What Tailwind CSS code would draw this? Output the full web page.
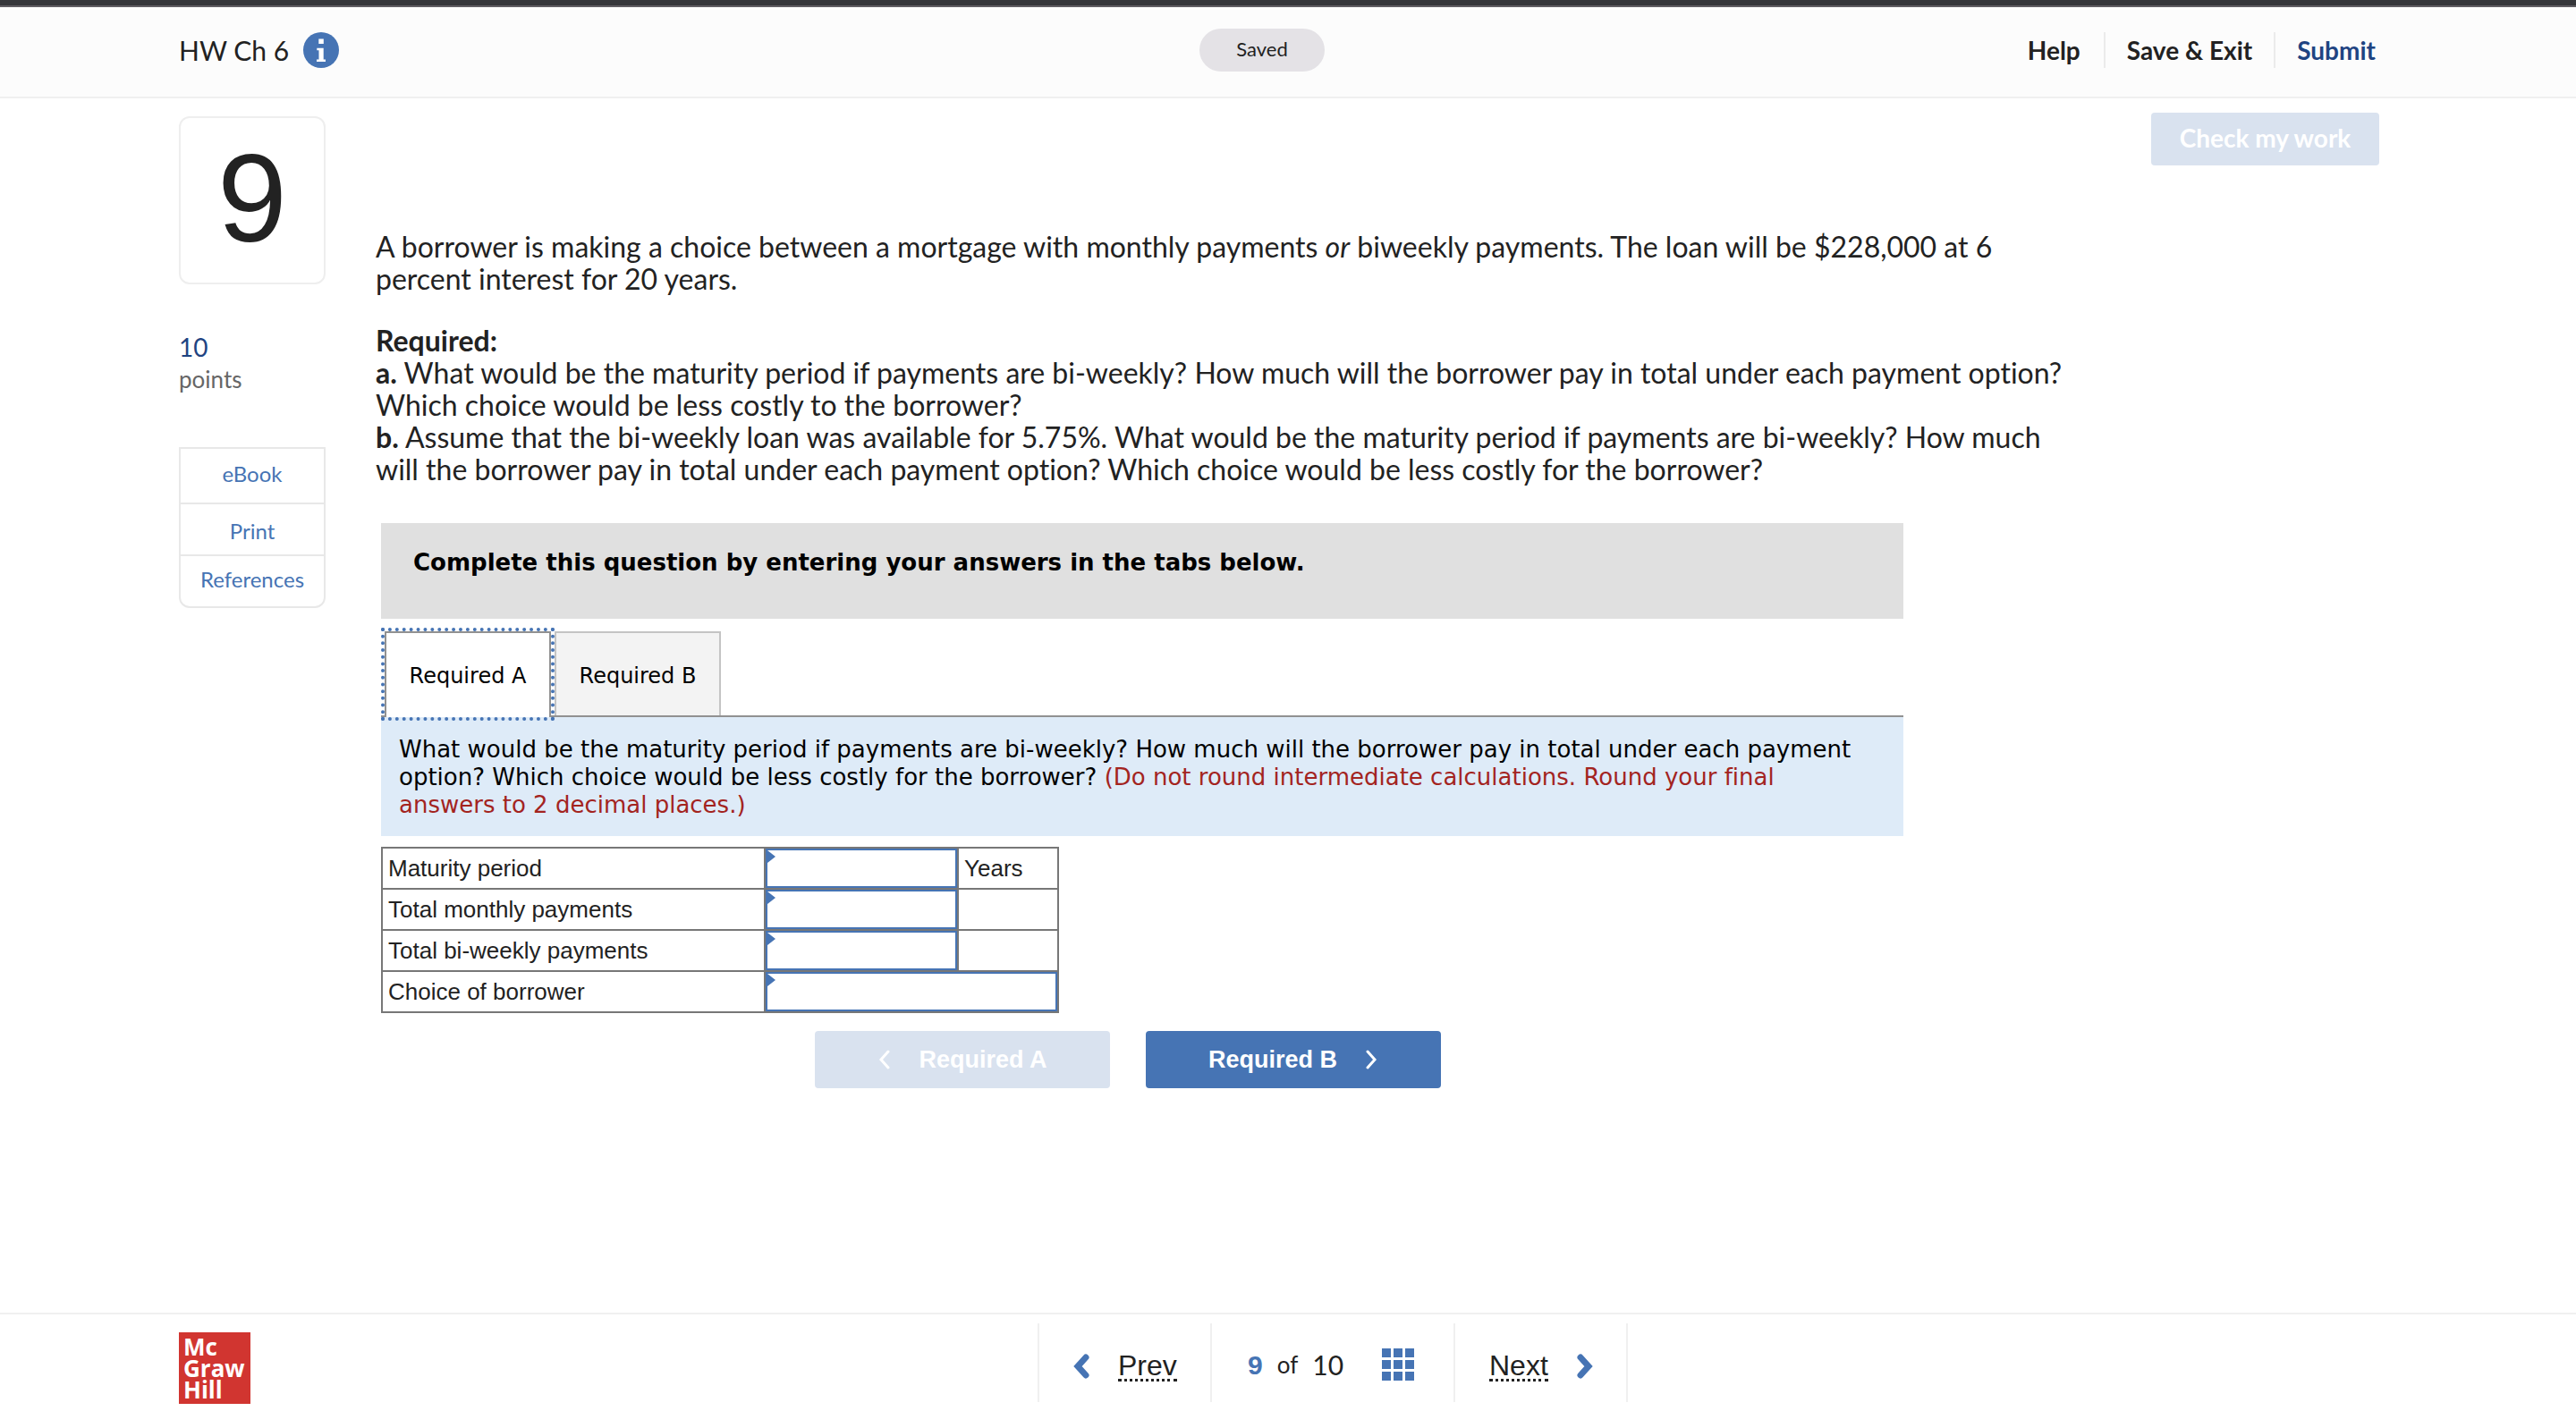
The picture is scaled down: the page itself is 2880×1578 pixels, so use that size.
<!DOCTYPE html>
<html lang="en">
<head>
    <meta charset="UTF-8">
    <meta name="viewport" content="width=device-width, initial-scale=1.0">
    <title>HW Ch 6</title>
    <script src="https://cdn.jsdelivr.net/npm/@tailwindcss/browser@4"></script>
</head>
<body class="flex min-h-screen flex-col bg-white font-['Lato',sans-serif] text-[#222] [font-variant-ligatures:none]">

    <!-- Header -->
    <header class="border-t-6 border-b-2 border-t-[#35363a] border-b-[#f0f0f0] bg-[#fcfcfc]">
        <div class="grid h-[102px] grid-cols-[1141fr_140px_1179fr] items-center border-t-2 border-[#5f5c62] pr-[220px] pb-1 pl-[200px]">
            <div class="flex items-center gap-4">
                <h1 class="text-[30px] leading-9">HW Ch 6</h1>
                <button type="button" aria-label="Assignment information">
                    <svg class="size-10" viewBox="0 0 40 40">
                        <circle cx="20" cy="20" r="20" fill="#4674b4"/>
                        <path fill="#fff" d="M17.300 7.500h5.500v5.500h-5.500zM15.300 17.700h7.400v12.800h2.300v2.500h-10v-2.500h2.500v-10.200h-2.200z"/>
                    </svg>
                </button>
            </div>
            <div class="flex h-12 items-center justify-center rounded-full bg-[#e4e2e6] pb-1 text-[22px]">Saved</div>
            <nav class="flex h-10 items-center justify-end pr-1 text-[28px] font-bold">
                <a href="#" class="px-[26px]">Help</a>
                <a href="#" class="border-x-2 border-[#ebebeb] px-6 leading-10">Save &amp; Exit</a>
                <a href="#" class="pl-6 text-[#1f4482]">Submit</a>
            </nav>
        </div>
    </header>

    <!-- Question -->
    <main class="flex grow items-start pt-4 pr-[220px] pl-[200px]">
        <aside class="mt-1 w-[164px] shrink-0">
            <div class="flex h-[188px] items-center justify-center rounded-xl border-2 border-[#eee] pb-1 font-['Liberation_Sans',Arial,sans-serif] text-[140px] leading-none">9</div>
            <p class="mt-[54px] text-[28px] leading-8 text-[#1f4482]">10</p>
            <p class="mt-0.5 text-[26px] leading-9 text-[#666]">points</p>
            <nav class="mt-[58px] flex flex-col divide-y-2 divide-[#e8e8e8] rounded-b-xl border-2 border-[#e8e8e8] text-center text-[24px] text-[#4674b4]">
                <a href="#" class="pb-1 leading-[56px]">eBook</a>
                <a href="#" class="pt-1 leading-[52px]">Print</a>
                <a href="#" class="pb-1 leading-[52px]">References</a>
            </nav>
        </aside>

        <section class="ml-14 grow">
            <div class="flex justify-end">
                <button type="button" disabled class="h-[59px] w-[255px] rounded bg-[#d9e2ef] pb-1 text-[28px] font-bold text-white">Check my work</button>
            </div>

            <div class="mt-[73px] text-[32px] leading-9 whitespace-nowrap">
                <p>A borrower is making a choice between a mortgage with monthly payments <i>or</i> biweekly payments. The loan will be $228,000 at 6<br>percent interest for 20 years.</p>
                <p class="mt-[33px]"><b>Required:</b><br>
                    <b>a.</b> What would be the maturity period if payments are bi-weekly? How much will the borrower pay in total under each payment option?<br>Which choice would be less costly to the borrower?<br>
                    <b>b.</b> Assume that the bi-weekly loan was available for 5.75%. What would be the maturity period if payments are bi-weekly? How much<br>will the borrower pay in total under each payment option? Which choice would be less costly for the borrower?</p>
            </div>

            <div class="mt-[42px] ml-1.5 w-[1702px] font-['DejaVu_Sans',Verdana,sans-serif] text-black">
                <div class="h-[107px] bg-[#e0e0e0] px-9 pt-7 text-[26px] leading-8 font-bold">Complete this question by entering your answers in the tabs below.</div>

                <!-- Tabs -->
                <div class="mt-[14px] flex border-b-2 border-[#919191] pl-1 text-[24px]" role="tablist">
                    <button type="button" role="tab" aria-selected="true" class="relative -mb-0.5 h-24 w-[186px] border-2 border-b-0 border-[#919191] bg-white pt-0.5 outline-4 outline-dotted outline-[#4674b4]">Required A</button>
                    <button type="button" role="tab" aria-selected="false" class="ml-1 h-[94px] w-[186px] border-2 border-b-0 border-[#c4c4c4] bg-[#f3f3f3] pt-1">Required B</button>
                </div>

                <div class="h-[133px] bg-[#deebf8] px-5 pt-[21px] text-[26px] leading-[31px] whitespace-nowrap">What would be the maturity period if payments are bi-weekly? How much will the borrower pay in total under each payment<br>option? Which choice would be less costly for the borrower? <span class="text-[#a3241f]">(Do not round intermediate calculations. Round your final<br>answers to 2 decimal places.)</span></div>

                <table class="mt-3 w-[758px] table-fixed border-collapse border-2 border-[#777] font-['Liberation_Sans',Arial,sans-serif] text-[26px] leading-8 text-[#222]">
                    <colgroup>
                        <col class="w-[428px]">
                        <col class="w-[216px]">
                        <col class="w-[112px]">
                    </colgroup>
                    <tr class="h-[46px]">
                        <td class="border-2 border-[#777] px-1.5"><label for="maturity">Maturity period</label></td>
                        <td class="relative border-2 border-[#777]">
                            <input id="maturity" type="text" class="block h-11 w-full border-2 border-[#4674b4] px-4 outline-none">
                            <svg class="absolute top-0.5 left-0.5 h-3.5 w-2.5" viewBox="0 0 10 14"><path d="M0 0L9 7L0 14z" fill="#4674b4"/></svg>
                        </td>
                        <td class="border-2 border-[#777] px-1.5">Years</td>
                    </tr>
                    <tr class="h-[46px]">
                        <td class="border-2 border-[#777] px-1.5"><label for="monthly">Total monthly payments</label></td>
                        <td class="relative border-2 border-[#777]">
                            <input id="monthly" type="text" class="block h-11 w-full border-2 border-[#4674b4] px-4 outline-none">
                            <svg class="absolute top-0.5 left-0.5 h-3.5 w-2.5" viewBox="0 0 10 14"><path d="M0 0L9 7L0 14z" fill="#4674b4"/></svg>
                        </td>
                        <td class="border-2 border-[#777]"></td>
                    </tr>
                    <tr class="h-[46px]">
                        <td class="border-2 border-[#777] px-1.5"><label for="biweekly">Total bi-weekly payments</label></td>
                        <td class="relative border-2 border-[#777]">
                            <input id="biweekly" type="text" class="block h-11 w-full border-2 border-[#4674b4] px-4 outline-none">
                            <svg class="absolute top-0.5 left-0.5 h-3.5 w-2.5" viewBox="0 0 10 14"><path d="M0 0L9 7L0 14z" fill="#4674b4"/></svg>
                        </td>
                        <td class="border-2 border-[#777]"></td>
                    </tr>
                    <tr class="h-[46px]">
                        <td class="border-2 border-[#777] px-1.5"><label for="choice">Choice of borrower</label></td>
                        <td colspan="2" class="relative border-2 border-[#777]">
                            <input id="choice" type="text" class="block h-11 w-full border-2 border-[#4674b4] px-4 outline-none">
                            <svg class="absolute top-0.5 left-0.5 h-3.5 w-2.5" viewBox="0 0 10 14"><path d="M0 0L9 7L0 14z" fill="#4674b4"/></svg>
                        </td>
                    </tr>
                </table>

                <div class="mt-5 flex justify-center gap-10 pr-8 font-['Liberation_Sans',Arial,sans-serif] text-[27px] font-bold text-white">
                    <button type="button" disabled class="flex h-16 w-[330px] items-center justify-center gap-8 rounded bg-[#d9e2ef]">
                        <svg class="h-[22px] w-3.5" viewBox="0 0 14 22" fill="none" stroke="currentColor" stroke-width="3" stroke-linecap="round"><path d="M12 2L4 11L12 20"/></svg>
                        Required A
                    </button>
                    <button type="button" class="flex h-16 w-[330px] items-center justify-center gap-8 rounded bg-[#4674b4]">
                        Required B
                        <svg class="h-[22px] w-3.5" viewBox="0 0 14 22" fill="none" stroke="currentColor" stroke-width="3" stroke-linecap="round"><path d="M2 2L10 11L2 20"/></svg>
                    </button>
                </div>
            </div>
        </section>
    </main>

    <!-- Footer -->
    <footer class="grid h-[110px] grid-cols-[960fr_660px_1060fr] border-t-2 border-[#f0f0f0] pl-[200px]">
        <div class="mt-5 flex size-20 flex-col bg-[#d13530] pt-1 pl-[5px] font-['Open_Sans',sans-serif] text-[26px] leading-6 font-bold text-white">
            <span>Mc</span>
            <span>Graw</span>
            <span>Hill</span>
        </div>
        <nav class="mt-2.5 flex h-[88px] divide-x-2 divide-[#f0f0f0] border-x-2 border-[#f0f0f0] text-[32px]">
            <a href="#" class="flex w-[193px] items-center gap-8 pt-2 pl-[38px] font-['Liberation_Sans',Arial,sans-serif]">
                <svg class="h-7 w-[18px]" viewBox="0 0 18 28" fill="none" stroke="#4674b4" stroke-width="7" stroke-linecap="round"><path d="M14 4L5 14L14 24"/></svg>
                <span class="border-b-3 border-dotted border-[#222] leading-[30px]">Prev</span>
            </a>
            <div class="flex grow items-center pt-1 pl-10 text-[30px]">
                <b class="font-['Liberation_Sans',Arial,sans-serif] text-[#4674b4]">9</b>
                <span class="ml-4 text-[26px]">of</span>
                <span class="ml-4">10</span>
                <button type="button" aria-label="Question list" class="ml-auto mr-11">
                    <svg class="size-9" viewBox="0 0 36 36" fill="#4674b4"><path d="M0 0h10v10H0zM13 0h10v10H13zM26 0h10v10H26zM0 13h10v10H0zM13 13h10v10H13zM26 13h10v10H26zM0 26h10v10H0zM13 26h10v10H13zM26 26h10v10H26z"/></svg>
                </button>
            </div>
            <a href="#" class="flex w-[191px] items-center gap-8 pt-2 pl-[38px] font-['Liberation_Sans',Arial,sans-serif]">
                <span class="border-b-3 border-dotted border-[#222] leading-[30px]">Next</span>
                <svg class="h-7 w-[18px]" viewBox="0 0 18 28" fill="none" stroke="#4674b4" stroke-width="7" stroke-linecap="round"><path d="M4 4L13 14L4 24"/></svg>
            </a>
        </nav>
    </footer>

</body>
</html>
